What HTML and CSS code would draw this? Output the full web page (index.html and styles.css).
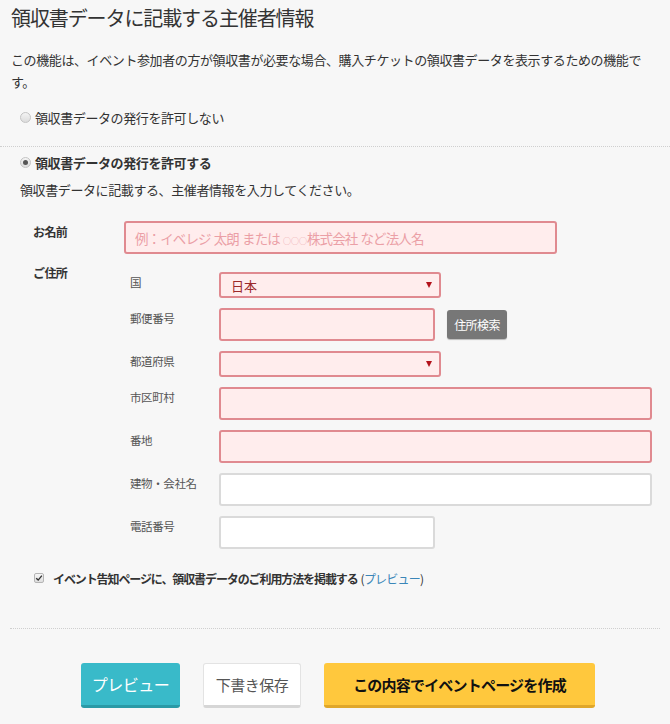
FILE: index.html
```html
<!DOCTYPE html>
<html lang="ja">
<head>
<meta charset="utf-8">
<title>領収書データに記載する主催者情報</title>
<link rel="stylesheet" href="styles.css">
</head>
<body>
<div class="page">
  <h1 class="title">領収書データに記載する主催者情報</h1>
  <p class="desc">この機能は、イベント参加者の方が領収書が必要な場合、購入チケットの領収書データを表示するための機能です。</p>

  <div class="radio-row">
    <span class="radio"></span>
    <span class="radio-text">領収書データの発行を許可しない</span>
  </div>
</div>
<hr class="sep sep-full">
<div class="page">
  <div class="radio-row radio-row-on">
    <span class="radio radio-checked"></span>
    <span class="radio-text">領収書データの発行を許可する</span>
  </div>
  <p class="instruction">領収書データに記載する、主催者情報を入力してください。</p>

  <div class="form">
    <div class="form-row">
      <div class="form-label">お名前</div>
      <div class="form-field">
        <div class="input input-error input-name"><span class="placeholder">例：イベレジ 太朗 または <span class="dots">○○○</span>株式会社 など法人名</span></div>
      </div>
    </div>
    <div class="form-row">
      <div class="form-label">ご住所</div>
      <div class="address">
        <div class="sub-label">国</div>
        <div class="sub-field">
          <div class="select input-error"><span class="select-value">日本</span><span class="arrow"></span></div>
        </div>
        <div class="sub-label">郵便番号</div>
        <div class="sub-field sub-field-row">
          <div class="input input-error input-short"></div>
          <button class="btn-search" type="button">住所検索</button>
        </div>
        <div class="sub-label">都道府県</div>
        <div class="sub-field">
          <div class="select input-error"><span class="select-value"></span><span class="arrow"></span></div>
        </div>
        <div class="sub-label">市区町村</div>
        <div class="sub-field">
          <div class="input input-error input-long"></div>
        </div>
        <div class="sub-label">番地</div>
        <div class="sub-field">
          <div class="input input-error input-long"></div>
        </div>
        <div class="sub-label">建物・会社名</div>
        <div class="sub-field">
          <div class="input input-ok input-long"></div>
        </div>
        <div class="sub-label">電話番号</div>
        <div class="sub-field">
          <div class="input input-ok input-short"></div>
        </div>
      </div>
    </div>
  </div>

  <div class="check-row">
    <span class="checkbox"><svg viewBox="0 0 10 10" width="8" height="8"><path d="M1.5 5.2 L4 7.6 L8.6 2" fill="none" stroke="#333" stroke-width="1.7"/></svg></span>
    <span class="check-text">イベント告知ページに、領収書データのご利用方法を掲載する</span>
    <span class="check-link">(<span class="link">プレビュー</span>)</span>
  </div>
</div>
<hr class="sep sep-bottom">
<div class="buttons">
  <button class="btn btn-preview" type="button">プレビュー</button>
  <button class="btn btn-draft" type="button">下書き保存</button>
  <button class="btn btn-create" type="button">この内容でイベントページを作成</button>
</div>
</body>
</html>
```
FILE: styles.css
```css
html, body {
  margin: 0;
  padding: 0;
  background: #f7f7f7;
}
body {
  font-family: "Noto Sans CJK JP", "Noto Sans", sans-serif;
  color: #333;
  width: 670px;
  height: 724px;
  overflow: hidden;
}
.page {
  padding: 0 10px 0 11px;
}
.title {
  margin: 0;
  padding-top: 4px;
  font-size: 20px;
  line-height: 28px;
  font-weight: 400;
  letter-spacing: -1.1px;
  color: #333;
}
.desc {
  margin: 17px 0 0;
  font-size: 13px;
  line-height: 22px;
  letter-spacing: -0.4px;
  color: #333;
}
.radio-row {
  display: flex;
  align-items: center;
  gap: 4px;
  margin: 13px 0 0 9px;
  height: 22px;
  font-size: 13px;
  letter-spacing: -0.4px;
  color: #333;
}
.radio {
  width: 9px;
  height: 9px;
  border-radius: 50%;
  border: 1px solid #c4c4c4;
  background: linear-gradient(#f4f4f4, #dcdcdc);
  position: relative;
  flex: none;
}
.radio-checked::after {
  content: "";
  position: absolute;
  left: 2px;
  top: 2px;
  width: 5px;
  height: 5px;
  border-radius: 50%;
  background: #555;
}
.radio-row-on {
  margin-top: 4px;
  font-weight: 700;
}
.sep {
  border: 0;
  border-top: 1px dotted #cfcfcf;
  height: 0;
  margin: 0;
}
.sep-full {
  margin-top: 18px;
}
.instruction {
  margin: 6px 0 0 9px;
  font-size: 13px;
  line-height: 22px;
  letter-spacing: -0.4px;
  color: #333;
}
.form {
  margin: 20px 0 0 22px;
  display: flex;
  flex-direction: column;
  gap: 8px;
}
.form-row {
  display: grid;
  grid-template-columns: 91px 1fr;
  align-items: start;
}
.form-label {
  font-size: 12px;
  font-weight: 700;
  line-height: 18px;
  padding-top: 2px;
  letter-spacing: -0.6px;
  color: #333;
}
.input {
  box-sizing: border-box;
  height: 33px;
  border-radius: 3px;
  display: flex;
  align-items: center;
  padding: 0 9px;
}
.input-error {
  border: 2px solid #e08a90;
  background: #ffeded;
}
.input-ok {
  border: 2px solid #dadada;
  background: #fff;
}
.input-name {
  width: 433px;
}
.placeholder {
  color: #eb9fa6;
  font-size: 13.5px;
  letter-spacing: -0.9px;
  word-spacing: 1px;
  white-space: pre;
}
.dots {
  font-size: 8px;
  letter-spacing: 0;
}
.address {
  display: grid;
  grid-template-columns: 89px 1fr;
  row-gap: 10px;
  margin: 10px 0 0 6px;
}
.sub-label {
  font-size: 11.5px;
  line-height: 18px;
  padding-top: 1px;
  color: #555;
  letter-spacing: -0.4px;
}
.sub-field-row {
  display: flex;
  align-items: center;
  gap: 12px;
}
.input-short {
  width: 216px;
}
.input-long {
  width: 433px;
}
.select {
  box-sizing: border-box;
  width: 222px;
  height: 26px;
  border-radius: 3px;
  display: flex;
  align-items: center;
  justify-content: space-between;
  padding: 0 7px 0 10px;
}
.select-value {
  font-size: 13px;
  color: #9b2a2a;
}
.arrow {
  width: 0;
  height: 0;
  border-left: 3px solid transparent;
  border-right: 3px solid transparent;
  border-top: 6px solid #b3121b;
}
.btn-search {
  box-sizing: border-box;
  width: 60px;
  height: 29px;
  border: 0;
  border-radius: 3px;
  background: #777;
  box-shadow: 0 1px 1px rgba(0,0,0,0.25);
  color: #fff;
  font-family: inherit;
  font-size: 12px;
  letter-spacing: -0.6px;
  padding: 0;
}
.check-row {
  display: flex;
  align-items: center;
  margin: 19px 0 0 23px;
  height: 20px;
  font-size: 12px;
}
.checkbox {
  box-sizing: border-box;
  width: 10px;
  height: 10px;
  border: 1px solid #b5b5b5;
  border-radius: 2px;
  background: linear-gradient(#f7f7f7, #dedede);
  display: flex;
  align-items: center;
  justify-content: center;
  margin-right: 9px;
  flex: none;
}
.check-text {
  font-weight: 700;
  color: #333;
  letter-spacing: -1.1px;
}
.check-link {
  margin-left: 3px;
  color: #333;
  letter-spacing: -0.8px;
}
.link {
  color: #3a86b8;
}
.sep-bottom {
  margin: 40px 10px 0 10px;
}
.buttons {
  display: flex;
  justify-content: center;
  gap: 23px;
  padding: 34px 0 0 6px;
}
.btn {
  box-sizing: border-box;
  height: 45px;
  border-radius: 3px;
  font-family: inherit;
  padding: 0;
  cursor: pointer;
}
.btn-preview {
  width: 99px;
  border: 0;
  border-bottom: 3px solid #2a9aa6;
  background: #39bac9;
  color: #fff;
  font-size: 16px;
  letter-spacing: -0.5px;
}
.btn-draft {
  width: 98px;
  border: 1px solid #e3e3e3;
  border-bottom: 3px solid #d6d6d6;
  background: #fff;
  color: #555;
  font-size: 15px;
  letter-spacing: -0.5px;
}
.btn-create {
  width: 271px;
  border: 0;
  border-bottom: 3px solid #e0a72a;
  background: #ffc83d;
  color: #111;
  font-size: 15px;
  font-weight: 700;
  letter-spacing: -0.8px;
}
```
